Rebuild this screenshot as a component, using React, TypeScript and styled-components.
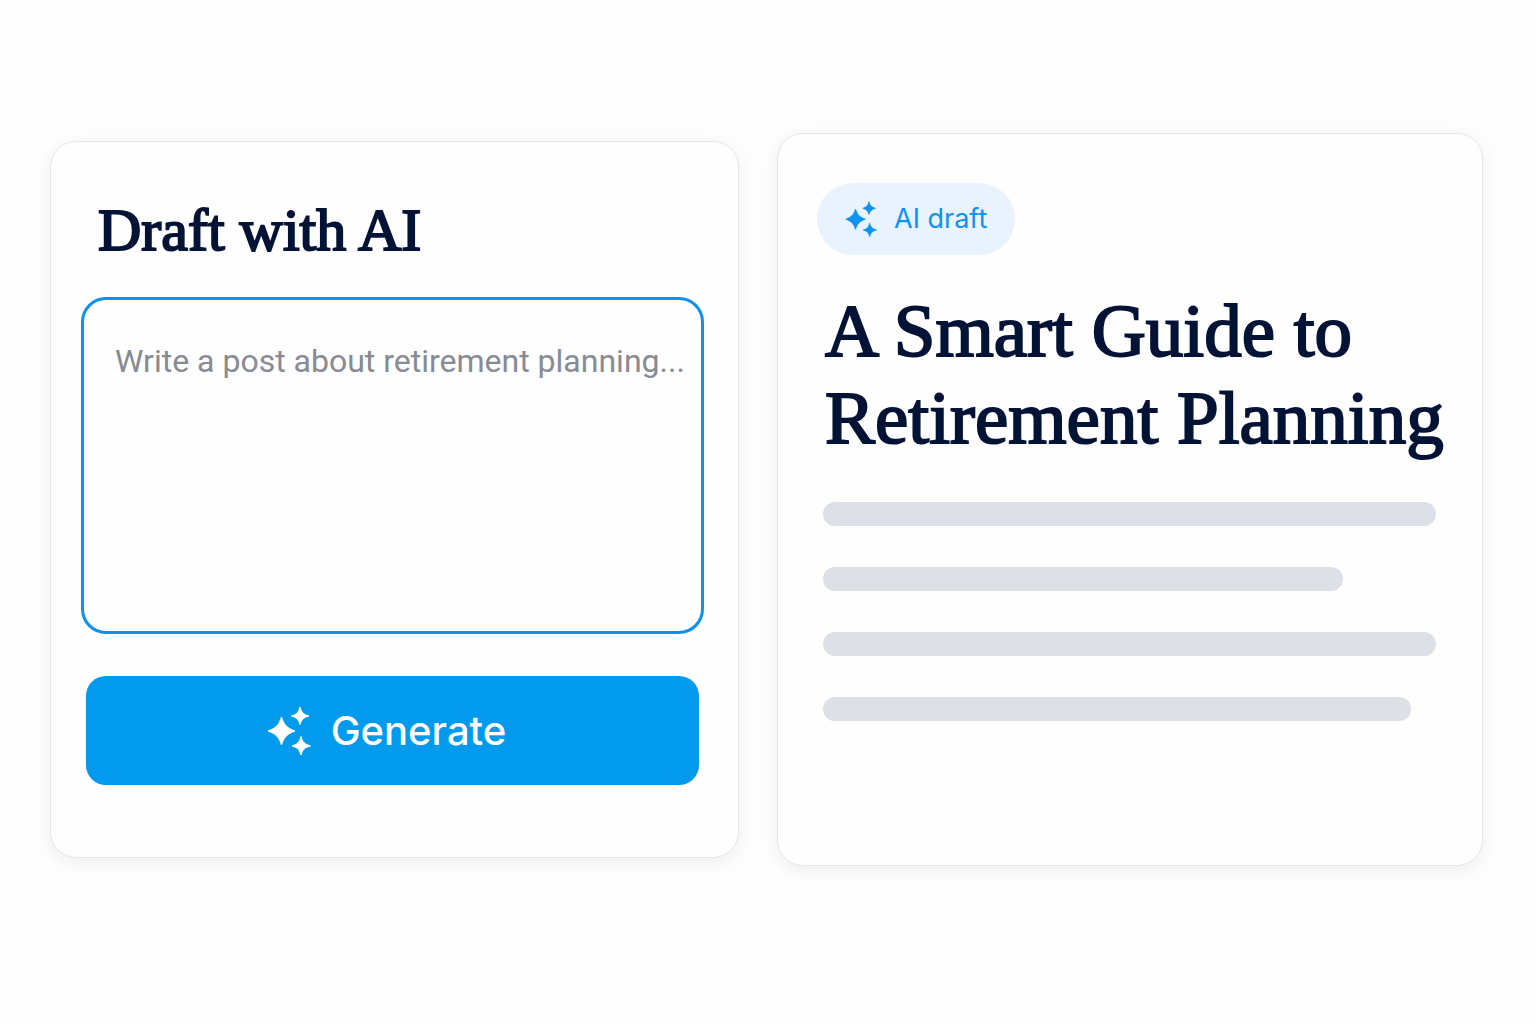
import React from "react";
import styled, { createGlobalStyle } from "styled-components";

const sans = `Inter, Roboto, "Liberation Sans", sans-serif`;
const serif = `"Liberation Serif", "Times New Roman", serif`;

const GlobalStyle = createGlobalStyle`
  *, *::before, *::after { box-sizing: border-box; }
  body { margin: 0; background: #fdfdfd; font-family: ${sans}; }
`;

const Page = styled.main`
  min-height: 100vh;
  padding: 32px 53px 57px 50px;
  display: grid;
  grid-template-columns: minmax(0, 689fr) minmax(0, 706fr);
  gap: 38px;
  align-items: center;
`;

const Card = styled.section`
  background: #fefefe;
  border: 1px solid #e5e6ea;
  border-radius: 26px;
  box-shadow: 0 4px 16px rgba(20, 24, 40, 0.06);
`;

const ComposerCard = styled(Card)`
  padding: 56px 34px 72px 30px;
`;

const DraftCard = styled(Card)`
  padding: 49px 33px 144px 39px;
`;

const Form = styled.form`
  display: flex;
  flex-direction: column;
`;

const Title = styled.h1`
  margin: 0 0 35px 17px;
  font: 400 60px/64px ${serif};
  color: #031336;
  -webkit-text-stroke: 2px #031336;
`;

const Prompt = styled.textarea`
  display: block;
  width: 100%;
  height: 337px;
  padding: 38px 8px 38px 31px;
  border: 3px solid #0a92ee;
  border-radius: 25px;
  outline: none;
  resize: none;
  background: transparent;
  color: #031336;
  font: 400 32px/46px Roboto, ${sans};

  &::placeholder {
    color: #878b94;
    opacity: 1;
  }
`;

const GenerateButton = styled.button`
  display: flex;
  align-items: center;
  justify-content: center;
  gap: 20px;
  height: 109px;
  margin: 42px 5px 0;
  padding: 0 12px 0 0;
  border: 0;
  border-radius: 20px;
  background: #029aec;
  color: #fff;
  font: 500 40px/50px ${sans};
  cursor: pointer;
`;

const Badge = styled.span`
  display: inline-flex;
  align-items: center;
  gap: 17px;
  height: 72px;
  padding: 0 28px;
  border-radius: 36px;
  background: #e8f3fe;
  color: #0d93f2;
  font: 400 27px/36px ${sans};
`;

const Article = styled.article`
  padding-left: 6px;
`;

const Headline = styled.h2`
  margin: 32px 0 41px;
  padding-left: 2px;
  font: 400 75px/87px ${serif};
  color: #031336;
  -webkit-text-stroke: 2px #031336;
  white-space: nowrap;
`;

const Lines = styled.div`
  display: grid;
  gap: 41px;
`;

const Line = styled.div<{ $width: number }>`
  width: ${(p) => p.$width}%;
  height: 24px;
  border-radius: 12px;
  background: #dde0e6;
`;

const Icon = styled.svg<{ $width: number }>`
  display: block;
  flex: none;
  width: ${(p) => p.$width}px;
  height: auto;
  fill: currentColor;
  stroke: currentColor;
  stroke-width: 1;
  stroke-linejoin: round;
`;

const Sparkles = ({ width }: { width: number }) => (
  <Icon $width={width} viewBox="0 0 44 50" aria-hidden="true">
    <path d="M14.5 11C17 19 20 22 28 25C20 28 17 31 14.5 39C12 31 9 28 1 25C9 22 12 19 14.5 11Z" />
    <path d="M33 1C34.5 6.5 36.5 8.5 42 10C36.5 11.5 34.5 13.5 33 18.5C31.5 13.5 29.5 11.5 24.5 10C29.5 8.5 31.5 6.5 33 1Z" />
    <path d="M34 30.5C35.5 36 37.500 38 43.500 40C37.500 41.500 35.500 43.500 34 49C32.500 43.500 30.500 41.500 25 40C30.500 38 32.500 36 34 30.500Z" />
  </Icon>
);

const lineWidths = [98, 83, 98, 94];

export default function App() {
  return (
    <>
      <GlobalStyle />
      <Page>
        <ComposerCard>
          <Form onSubmit={(e) => e.preventDefault()}>
            <Title id="composer-title">Draft with AI</Title>
            <Prompt
              aria-labelledby="composer-title"
              placeholder="Write a post about retirement planning..."
            />
            <GenerateButton type="submit">
              <Sparkles width={44} />
              Generate
            </GenerateButton>
          </Form>
        </ComposerCard>
        <DraftCard>
          <Badge>
            <Sparkles width={32} />
            AI draft
          </Badge>
          <Article>
            <Headline>
              A Smart Guide to
              <br />
              Retirement Planning
            </Headline>
            <Lines aria-hidden="true">
              {lineWidths.map((w, i) => (
                <Line key={i} $width={w} />
              ))}
            </Lines>
          </Article>
        </DraftCard>
      </Page>
    </>
  );
}
